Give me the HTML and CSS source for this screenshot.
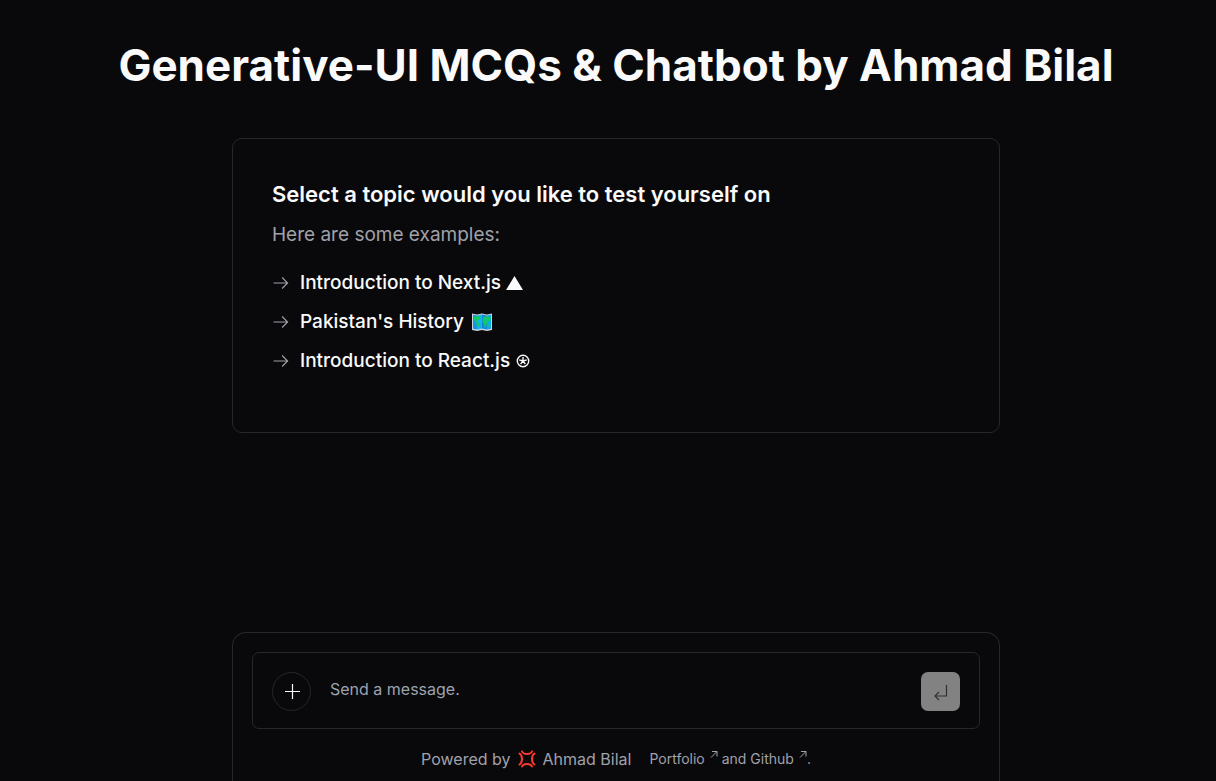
FILE: index.html
```html
<!DOCTYPE html>
<html lang="en">
<head>
<meta charset="utf-8">
<meta name="viewport" content="width=device-width, initial-scale=1">
<title>Generative-UI MCQs &amp; Chatbot by Ahmad Bilal</title>
<link rel="stylesheet" href="styles.css">
</head>
<body>
<main class="page">
  <h1 class="title">Generative-UI MCQs &amp; Chatbot by Ahmad Bilal</h1>
  <section class="card">
    <h2 class="card-title">Select a topic would you like to test yourself on</h2>
    <p class="card-text">Here are some examples:</p>
    <div class="topics">
      <button class="topic" type="button">
        <svg class="arrow" viewBox="0 0 256 256" aria-hidden="true"><path d="M22 128H222M144 50l78 78-78 78"/></svg>
        <span>Introduction to Next.js</span>
        <svg class="triangle" viewBox="0 0 17 14" aria-hidden="true"><path d="M8.500 0 17 14H0z"/></svg>
      </button>
      <button class="topic" type="button">
        <svg class="arrow" viewBox="0 0 256 256" aria-hidden="true"><path d="M22 128H222M144 50l78 78-78 78"/></svg>
        <span>Pakistan's History</span>
        <svg class="map" viewBox="0 0 20 18" aria-hidden="true">
          <path fill="#c9d3d8" d="M0 .5 5 1.500 10 .5l5 1L20 .5V17l-5 1-5-1-5 1-5-1z"/>
          <path fill="#1494e8" d="M1 1.700l4 .8v14l-4-.8z"/>
          <path fill="#15b0f2" d="M5 2.500l5-1v14l-5 1z"/>
          <path fill="#1487d8" d="M10 1.500l5 1v14l-5-1z"/>
          <path fill="#10a5f0" d="M15 2.500l4-.8v14l-4 .8z"/>
          <path fill="#10c96c" d="M2 4l3-1 3.500 0L8 6 6 7.500 5 9 7.500 10.500 7 13l-1.500 2L4.500 11 3 8 1.500 6.500zM11 4.500 14 3l4.500 1v3L17 9l-1-1-1 2-1 4-1.500.500-.5-4-1.500-1.500zM16.500 11.500l2 .5v2l-2-.5z"/>
        </svg>
      </button>
      <button class="topic" type="button">
        <svg class="arrow" viewBox="0 0 256 256" aria-hidden="true"><path d="M22 128H222M144 50l78 78-78 78"/></svg>
        <span>Introduction to React.js</span>
        <svg class="star" viewBox="0 0 14 14" aria-hidden="true"><circle cx="7" cy="7" r="5.700"/><path d="M7 7V3M7 7l3.800-1.200M7 7l2.400 3.200M7 7l-2.400 3.200M7 7 3.200 5.800"/></svg>
      </button>
    </div>
  </section>

  <section class="panel">
    <form class="composer">
      <button class="new-chat" type="button" aria-label="New chat">
        <svg viewBox="0 0 16 16" aria-hidden="true"><path d="M8.500 1v15M1 8.500h15"/></svg>
      </button>
      <input class="message" type="text" placeholder="Send a message." aria-label="Send a message.">
      <button class="send" type="submit" aria-label="Send message" disabled>
        <svg viewBox="0 0 16 16" aria-hidden="true"><path d="M13.500 2v11H2M6 9l-4 4 4 4"/></svg>
      </button>
    </form>
    <footer class="footer">
      <p class="powered">
        <span>Powered by</span>
        <svg class="anger" viewBox="0 0 18 18" aria-hidden="true"><path d="M4 1.500Q5 4 9 4t5-2.500M4 16.500Q5 14 9 14t5 2.500M1.500 3.500Q4 5 4 9t-2.500 5.500M16.500 3.500Q14 5 14 9t2.500 5.500"/></svg>
        <span>Ahmad Bilal</span>
      </p>
      <p class="links">
        <a href="#portfolio">Portfolio<svg class="external" viewBox="0 0 8 8" aria-hidden="true"><path d="M1 7.500 7 1.500M2 1.500h5v5"/></svg></a>
        and
        <a href="#github">Github<svg class="external" viewBox="0 0 8 8" aria-hidden="true"><path d="M1 7.500 7 1.500M2 1.500h5v5"/></svg></a>.
      </p>
    </footer>
  </section>
</main>
</body>
</html>
```
FILE: styles.css
```css
* { box-sizing: border-box; }

body {
  margin: 0;
  background: #09090b;
  color: #fafafa;
  font-family: Inter, "Liberation Sans", sans-serif;
}

h1, h2, p { margin: 0; }
button, input { font: inherit; }
svg { flex: none; fill: none; stroke: currentColor; }

.page {
  display: flex;
  flex-direction: column;
  align-items: center;
  min-height: 100vh;
  padding-left: 16px;
}

.title {
  padding: 39px 0 0;
  font-size: 44px;
  line-height: 53px;
  font-weight: 700;
  text-align: center;
}

.card {
  width: 100%;
  max-width: 768px;
  margin-top: 46px;
  padding: 38px 39px 57px;
  border: 1px solid #27272a;
  border-radius: 10px;
}

.card-title {
  font-size: 22px;
  line-height: 34px;
  font-weight: 600;
}

.card-text {
  margin-top: 10px;
  color: #a1a1aa;
  font-size: 19px;
  line-height: 28px;
}

.topics {
  display: flex;
  flex-direction: column;
  align-items: flex-start;
  gap: 11px;
  margin-top: 20px;
}

.topic {
  display: flex;
  align-items: center;
  padding: 0;
  border: 0;
  background: none;
  color: #fafafa;
  font-size: 19px;
  line-height: 28px;
  font-weight: 500;
  cursor: pointer;
}

.arrow {
  width: 18px;
  height: 18px;
  margin-right: 10px;
  color: #a1a1aa;
  stroke-width: 16;
}

.triangle {
  width: 17px;
  height: 14px;
  margin-left: 5px;
  fill: currentColor;
  stroke: none;
}

.map {
  width: 20px;
  height: 18px;
  margin-left: 8px;
  stroke: none;
}

.star {
  width: 14px;
  height: 14px;
  margin-left: 6px;
  stroke-width: 1.4;
}

.panel {
  width: 100%;
  max-width: 768px;
  margin-top: auto;
  padding: 19px 19px 10px;
  border: 1px solid #27272a;
  border-bottom: 0;
  border-radius: 14px 14px 0 0;
}

.composer {
  display: flex;
  align-items: center;
  padding: 18px 19px 17px;
  border: 1px solid #27272a;
  border-radius: 7px;
}

.new-chat, .send {
  display: flex;
  flex: none;
  align-items: center;
  justify-content: center;
  width: 39px;
  height: 39px;
  padding: 0;
}

.new-chat {
  border: 1px solid #27272a;
  border-radius: 50%;
  background: #09090b;
  color: #fafafa;
}

.new-chat svg {
  width: 16px;
  height: 16px;
  stroke-width: 1.2;
}

.message {
  flex: 1;
  min-width: 0;
  height: 40px;
  padding: 0 19px 4px;
  border: 0;
  outline: 0;
  background: none;
  color: #fafafa;
  font-size: 16px;
}

.message::placeholder { color: #9ca3af; opacity: 1; }

.send {
  border: 0;
  border-radius: 7px;
  background: #828282;
  color: #303034;
}

.send svg {
  width: 16px;
  height: 16px;
  overflow: visible;
  stroke-width: 1.2;
}

.footer {
  display: flex;
  align-items: center;
  justify-content: center;
  gap: 18px;
  margin-top: 18px;
  color: #a1a1aa;
}

.powered {
  display: flex;
  align-items: center;
  gap: 7px;
  font-size: 16px;
  line-height: 24px;
}

.anger {
  width: 18px;
  height: 18px;
  color: #f83a2e;
  stroke-width: 2;
  stroke-linecap: round;
}

.links { font-size: 14px; line-height: 24px; }
.links a { color: inherit; text-decoration: none; }

.external {
  width: 8px;
  height: 8px;
  margin-left: 5px;
  vertical-align: 6px;
}
```
